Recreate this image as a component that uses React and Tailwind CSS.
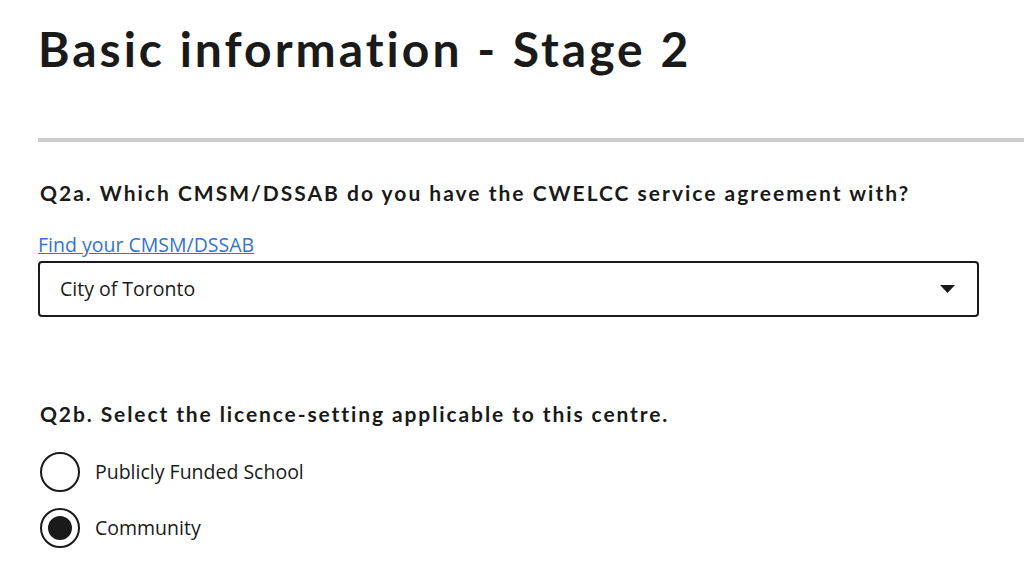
import React, { useState } from 'react';

const head = { fontFamily: '"Lato", "Open Sans", sans-serif' };
const body = { fontFamily: '"Open Sans", "Noto Sans", sans-serif' };

function Radio({ checked, label, onClick }) {
  return (
    <label className="flex items-center gap-[15px] cursor-pointer" onClick={onClick}>
      <span className="w-[40px] h-[40px] rounded-full border-2 border-[#1a1a1a] bg-white flex items-center justify-center shrink-0">
        {checked && <span className="w-[24px] h-[24px] rounded-full bg-[#1a1a1a]" />}
      </span>
      <span className="text-[19.5px] text-[#1a1a1a]">{label}</span>
    </label>
  );
}

export default function App() {
  const [setting, setSetting] = useState('community');

  return (
    <div className="min-h-screen bg-white text-[#1a1a1a] overflow-hidden" style={body}>
      <div className="pl-[38px]">
        <h1 className="text-[48px] font-bold leading-none pt-[25px] tracking-[3px]" style={head}>
          Basic information - Stage 2
        </h1>

        <div className="mt-[65px] h-[4px] bg-[#cccccc]" />

        <div className="w-[941px]">
          <h2 className="mt-[37px] text-[21px] font-bold leading-[28px] pl-[2px] tracking-[2px]" style={head}>
            Q2a. Which CMSM/DSSAB do you have the CWELCC service agreement with?
          </h2>

          <a href="#" className="block mt-[25px] text-[19.5px] leading-[26px] text-[#3273d4] underline">
            Find your CMSM/DSSAB
          </a>

          <div className="mt-[3px] h-[56px] border-2 border-[#1a1a1a] rounded-[4px] flex items-center justify-between pl-[20px] pr-[22px]">
            <span className="text-[19.5px]">City of Toronto</span>
            <svg width="15" height="8" viewBox="0 0 15 8">
              <path d="M0 0 H15 L7.5 8 Z" fill="#1a1a1a" />
            </svg>
          </div>

          <h2 className="mt-[83px] text-[21px] font-bold leading-[28px] pl-[2px] tracking-[1.9px]" style={head}>
            Q2b. Select the licence-setting applicable to this centre.
          </h2>

          <div className="mt-[24px] flex flex-col gap-[16px] pl-[2px]">
            <Radio
              label="Publicly Funded School"
              checked={setting === 'school'}
              onClick={() => setSetting('school')}
            />
            <Radio
              label="Community"
              checked={setting === 'community'}
              onClick={() => setSetting('community')}
            />
          </div>
        </div>
      </div>
    </div>
  );
}
